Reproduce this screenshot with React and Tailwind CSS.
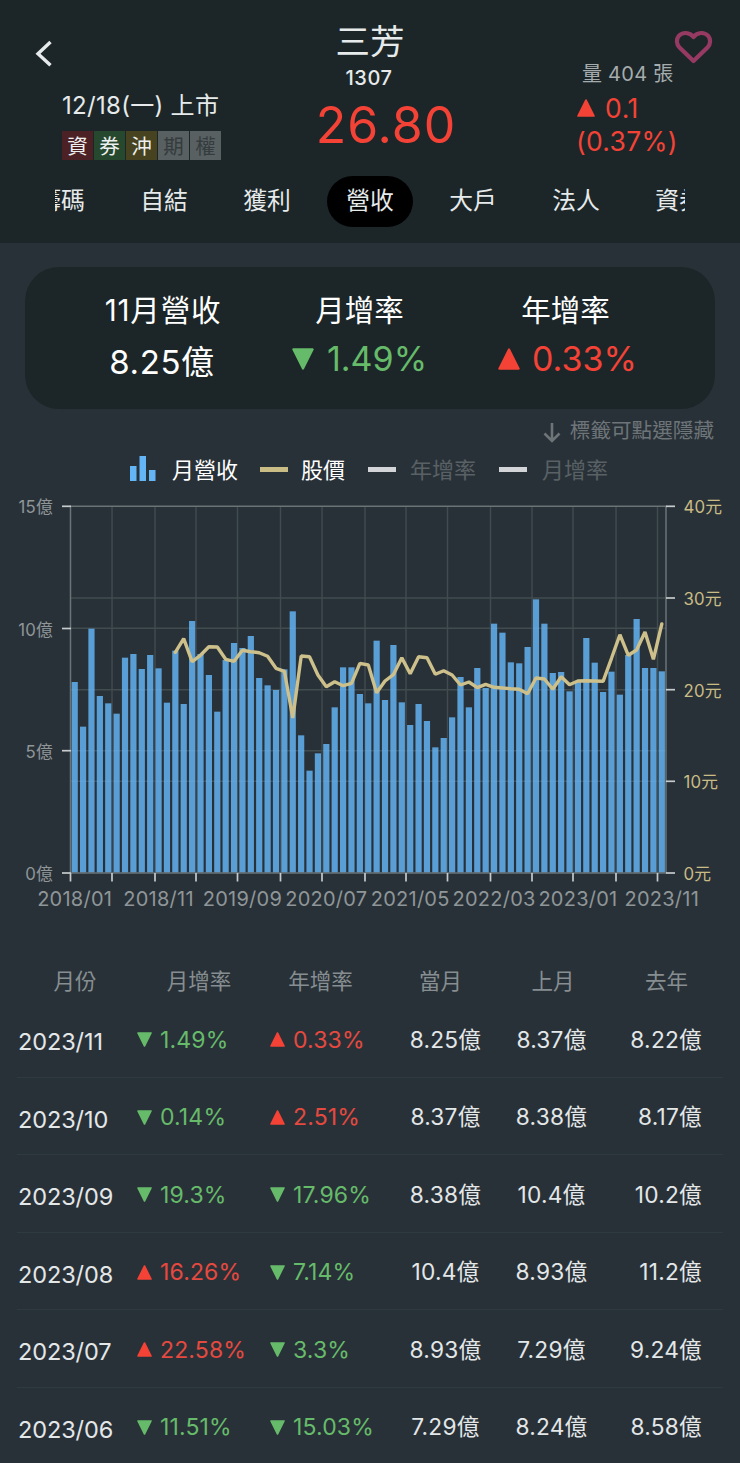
import React from "react";

const PLOT = { left: 70.5, right: 666, top: 506, bottom: 872.7 };
const STEP = (PLOT.right - PLOT.left) / 71;
const OFFSET_Y = 490;

// Bar tops and price points, in thirds of a pixel below the chart's upper edge.
const BAR_TOPS = [
  576, 710, 416, 618, 640, 671, 503, 492, 537, 495, 535, 638, 482, 642, 393, 492, 555, 665, 510, 459,
  474, 438, 564, 586, 600, 538, 364, 736, 842, 790, 762, 652, 532, 532, 612, 640, 452, 630, 465, 637,
  705, 642, 693, 772, 744, 682, 561, 652, 534, 594, 401, 428, 517, 520, 471, 328, 401, 549, 546, 604,
  575, 444, 518, 606, 545, 614, 495, 387, 534, 534, 544,
];
const PRICE_START = 12;
const PRICES = [
  487, 446, 515, 496, 470, 471, 508, 514, 481, 485, 488, 499, 535, 544, 684, 498, 500, 555, 590, 575,
  587, 580, 520, 525, 608, 573, 554, 503, 551, 500, 503, 553, 542, 555, 585, 576, 593, 583, 592, 594,
  596, 598, 611, 564, 567, 598, 560, 584, 573, 572, 573, 574, 505, 434, 496, 480, 426, 508, 402,
];
const X_TICKS = [70.5, 112, 155, 196, 237.5, 280.5, 322, 365, 406, 447.5, 490.5, 532, 573, 616, 657.5];
const X_LABELS = ["2018/01", "2018/11", "2019/09", "2020/07", "2021/05", "2022/03", "2023/01", "2023/11"];
const LEFT_AXIS = [["15億", 506.3], ["10億", 628.5], ["5億", 750.7], ["0億", 873]];
const RIGHT_AXIS = [["40元", 506.3], ["30元", 598], ["20元", 689.7], ["10元", 781.3], ["0元", 873]];

const TAGS = [
  ["資", "bg-[#4c2126] text-[#eef0f0]"],
  ["券", "bg-[#26482f] text-[#eef0f0]"],
  ["沖", "bg-[#474320] text-[#eef0f0]"],
  ["期", "bg-[#586062] text-[#353c3e]"],
  ["權", "bg-[#586062] text-[#353c3e]"],
];

const ROWS = [
  ["2023/11", "-1.49%", "+0.33%", "8.25億", "8.37億", "8.22億"],
  ["2023/10", "-0.14%", "+2.51%", "8.37億", "8.38億", "8.17億"],
  ["2023/09", "-19.3%", "-17.96%", "8.38億", "10.4億", "10.2億"],
  ["2023/08", "+16.26%", "-7.14%", "10.4億", "8.93億", "11.2億"],
  ["2023/07", "+22.58%", "-3.3%", "8.93億", "7.29億", "9.24億"],
  ["2023/06", "-11.51%", "-15.03%", "7.29億", "8.24億", "8.58億"],
];

function Triangle({ up, className }) {
  return (
    <svg viewBox="0 0 16 16" className={`shrink-0 ${className}`} fill="currentColor" stroke="currentColor" strokeWidth="1.6" strokeLinejoin="round">
      <path d={up ? "M8 1 L15 15 H1 Z" : "M8 15 L15 1 H1 Z"} />
    </svg>
  );
}

function Change({ value }) {
  const up = value[0] === "+";
  return (
    <div className={`flex items-center gap-[8px] ${up ? "text-[#f44336]" : "text-[#66bb6a]"}`}>
      <Triangle up={up} className="h-[15px] w-[15px]" />
      <span className={`text-[23px] tracking-[0.15px] ${up ? "text-[#e5493f]" : ""}`}>{value.slice(1)}</span>
    </div>
  );
}

function Tab({ children, active }) {
  return (
    <div className="flex w-[103px] shrink-0 justify-center">
      <div className={`flex h-[51px] w-[86px] shrink-0 items-center justify-center rounded-full pb-[2px] text-[23.8px] ${active ? "bg-black" : ""}`}>{children}</div>
    </div>
  );
}

function Header() {
  return (
    <header className="relative h-[243px] bg-[#1c2628] text-[#e6eaeb]">
      <div className="flex h-[176px]">
        <div className="flex w-[300px] flex-col">
          <svg className="ml-[32px] mt-[38px] h-[31px] w-[24px]" viewBox="0 0 24 31" fill="none" stroke="currentColor" strokeWidth="3.4">
            <path d="M18.5 4 L6 15.7 L18.5 27.3" />
          </svg>
          <div className="ml-[62px] mt-[21px] whitespace-nowrap text-[24px] leading-[32px] tracking-[0.3px]">12/18(一) 上市</div>
          <div className="ml-[62px] mt-[9px] flex gap-px">
            {TAGS.map(([label, tone]) => (
              <span key={label} className={`h-[29px] w-[31px] text-center text-[20.5px] leading-[31px] ${tone}`}>{label}</span>
            ))}
          </div>
        </div>
        <div className="flex w-[140px] flex-col items-center pt-[20px]">
          <h1 className="text-[34.5px] leading-[44px]">三芳</h1>
          <div className="pr-[2px] text-[20px] font-medium leading-[28px] tracking-[0.6px]">1307</div>
          <div className="pl-[32px] text-[50px] leading-[66px] tracking-[1px] text-[#f44336]">26.80</div>
        </div>
        <div className="ml-[136px] flex flex-col pt-[58px]">
          <div className="whitespace-nowrap pl-[6px] text-[20px] leading-[33px] tracking-[0.25px] text-[#a6acad]">量 404 張</div>
          <div className="flex items-center gap-[10px] pl-px text-[26.5px] leading-[34px] tracking-[0.6px] text-[#f44336]">
            <Triangle up className="h-[18px] w-[18px]" />
            <span>0.1</span>
          </div>
          <div className="text-[26.5px] leading-[32px] tracking-[0.3px] text-[#f44336]">(0.37%)</div>
        </div>
      </div>
      <svg className="absolute left-[674px] top-[29px] h-[36px] w-[40px]" viewBox="0 0 40 36" fill="none" stroke="#963a63" strokeWidth="4.2" strokeLinejoin="round">
        <path d="M19.5 32 L5.500 18.500 C2.300 15.300 2 10.200 4.800 6.900 C8.500 2.900 15.500 2.800 19.500 8 C23.500 2.800 30.500 2.900 34.200 6.900 C37 10.200 36.700 15.300 33.500 18.500 Z" />
      </svg>
      <nav className="ml-[55px] flex w-[630px] justify-center overflow-hidden">
        {["籌碼", "自結", "獲利", "營收", "大戶", "法人", "資券"].map((t) => (
          <Tab key={t} active={t === "營收"}>{t}</Tab>
        ))}
      </nav>
    </header>
  );
}

function Summary() {
  return (
    <section className="mx-[25px] mt-[24px] grid h-[142px] grid-cols-[69px_206px_206px_209px] rounded-[34px] bg-[#1c2628] text-[29.5px] text-white">
      <div className="col-start-1 col-end-3 pl-[68px]">
        <div className="w-[140px] pt-[22px] text-center leading-[42px] tracking-[0.8px]">11月營收</div>
        <div className="w-[138px] text-center text-[33px] leading-[62px] tracking-[0.6px]">8.25億</div>
      </div>
      <div className="text-center">
        <div className="pr-[87px] pt-[22px] leading-[42px]">月增率</div>
        <div className="flex items-center gap-[13px] text-[34px] leading-[56px] text-[#66bb6a]">
          <Triangle className="-ml-[8px] h-[22px] w-[22px]" />
          <span>1.49%</span>
        </div>
      </div>
      <div className="text-center">
        <div className="pr-[90px] pt-[22px] leading-[42px]">年增率</div>
        <div className="flex items-center gap-[12px] text-[34px] leading-[56px] text-[#f44336]">
          <Triangle up className="-ml-[8px] h-[22px] w-[22px]" />
          <span>0.33%</span>
        </div>
      </div>
    </section>
  );
}

function Legend() {
  return (
    <div className="flex h-[40px] items-center whitespace-nowrap pl-[130px] text-[22px] text-white">
      <svg className="mb-[4px] h-[25px] w-[26px] fill-[#64b5f6]" viewBox="0 0 26 25">
        <path d="M0 10h6.500v15H0zM9.500 0h6.500v25H9.500zM19 14h6.500v11H19z" />
      </svg>
      <span className="ml-[16px] w-[88px]">月營收</span>
      <i className="mb-[2px] h-[5px] w-[28px] bg-[#c9bc85]" />
      <span className="ml-[13px] w-[67px]">股價</span>
      <i className="mb-[2px] h-[5px] w-[28px] bg-[#d2d4d8]" />
      <span className="ml-[14px] w-[89px] text-[#596165]">年增率</span>
      <i className="mb-[2px] h-[5px] w-[28px] bg-[#d2d4d8]" />
      <span className="ml-[15px] text-[#596165]">月增率</span>
    </div>
  );
}

function Chart() {
  const cx = (i) => PLOT.left + STEP * (i + 0.5);
  const cy = (v) => OFFSET_Y + v / 3;
  const line = PRICES.map((v, i) => `${cx(i + PRICE_START).toFixed(1)},${cy(v).toFixed(1)}`).join(" ");
  return (
    <svg className="block h-[440px] w-[740px]" viewBox="0 490 740 440">
      <g stroke="#414c4f" strokeWidth="1.4">
        {X_TICKS.slice(1).map((x) => <path key={x} d={`M${x} 506V873`} />)}
        {[598, 628.3, 689.7, 750.7, 781.3].map((y) => <path key={y} d={`M70 ${y}H666`} />)}
      </g>
      <g fill="#64b5f6" fillOpacity="0.83">
        {BAR_TOPS.map((v, i) => (
          <rect key={i} x={cx(i) - 3.1} y={cy(v)} width="6.2" height={PLOT.bottom - cy(v)} />
        ))}
      </g>
      <g stroke="#6a7376" strokeWidth="1.5" fill="none">
        <path d="M70.500 873V506.300H666V873Z" />
      </g>
      <g stroke="#c6cbcd" strokeWidth="1.7">
        {LEFT_AXIS.map(([t, y]) => <path key={t} d={`M62 ${y}H71`} />)}
        {RIGHT_AXIS.map(([t, y]) => <path key={t} d={`M666 ${y}H675`} />)}
        {X_TICKS.map((x) => <path key={x} d={`M${x} 873V881.500`} />)}
      </g>
      <polyline points={line} fill="none" stroke="#cdc08b" strokeWidth="3.4" strokeLinejoin="bevel" strokeLinecap="round" />
      <g fontSize="16.800" fill="#8f9698" textAnchor="end" letterSpacing="0.2">
        {LEFT_AXIS.map(([t, y]) => <text key={t} x="53" y={y + 7}>{t}</text>)}
      </g>
      <g fontSize="16.800" fill="#c9bc85" letterSpacing="0.2">
        {RIGHT_AXIS.map(([t, y]) => <text key={t} x="683.500" y={y + 7}>{t}</text>)}
      </g>
      <g fontSize="20" fill="#8f9698" textAnchor="middle" letterSpacing="0.250">
        {X_LABELS.map((t, i) => <text key={t} x={cx(i * 10)} y="905.500">{t}</text>)}
      </g>
    </svg>
  );
}

function Table() {
  return (
    <section className="mt-[30px]">
      <div className="flex h-[40px] items-center pt-[3px] text-[21.5px] text-[#868e91]">
        <span className="w-[150px] text-center">月份</span>
        <span className="w-[98px] text-center">月增率</span>
        <span className="w-[145px] text-center">年增率</span>
        <span className="w-[95px] text-center">當月</span>
        <span className="w-[130px] text-center">上月</span>
        <span className="w-[97px] text-center">去年</span>
      </div>
      <div className="mx-[17px]">
        {ROWS.map((r) => (
          <div key={r[0]} className="grid h-[77.5px] grid-cols-[120px_133px_117px_117px_95px_103px] items-center whitespace-nowrap border-b border-[#2d3b3f] pt-[3px] text-[22.7px] text-[#e3e7e8]">
            <span className="pl-px pt-[4px] text-[23.5px] tracking-[-0.1px]">{r[0]}</span>
            <Change value={r[1]} />
            <Change value={r[2]} />
            <span className="text-center tracking-[0.25px]">{r[3]}</span>
            <span className="text-center tracking-[0.25px]">{r[4]}</span>
            <span className="text-right tracking-[0.25px]">{r[5]}</span>
          </div>
        ))}
      </div>
    </section>
  );
}

export default function App() {
  return (
    <main className="h-[1463px] w-[740px] overflow-hidden bg-[#293138] font-['Inter','Noto_Sans_CJK_TC',sans-serif]">
      <Header />
      <Summary />
      <div className="flex h-[41px] items-center justify-end gap-[9px] pr-[26px] pt-[4px] text-[20.6px] text-[#6e7578]">
        <svg className="mt-[2px] h-[20px] w-[18px]" viewBox="0 0 18 20" fill="none" stroke="currentColor" strokeWidth="2.6">
          <path d="M9 0V17.500M1.500 10.500L9 18L16.500 10.500" />
        </svg>
        <span>標籤可點選隱藏</span>
      </div>
      <Legend />
      <Chart />
      <Table />
    </main>
  );
}
